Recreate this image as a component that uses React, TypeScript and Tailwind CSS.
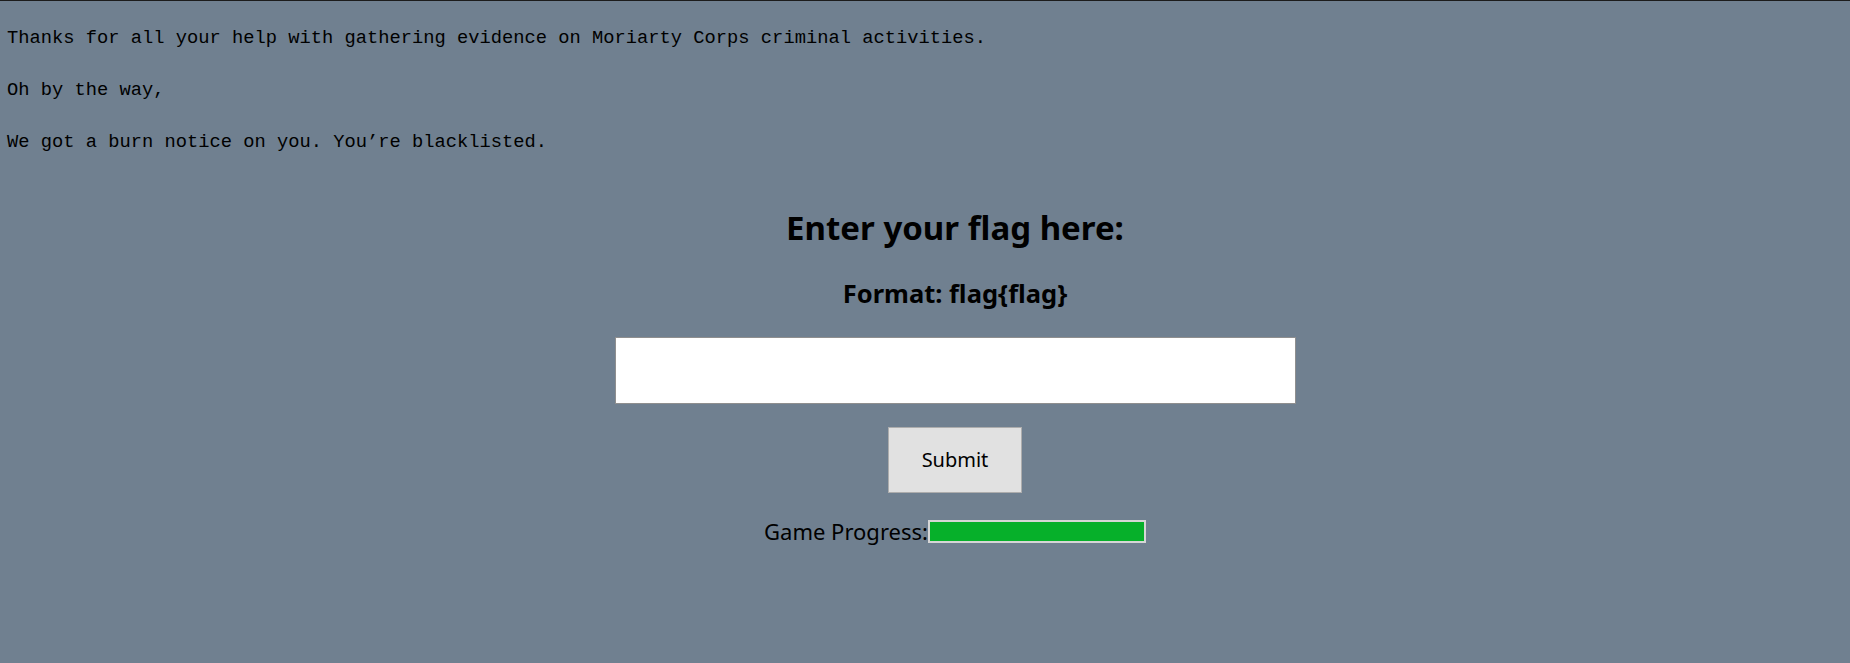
const Notice = () => {
  return (
    <div className="pt-[11px] pl-[7px] font-['Liberation_Mono',monospace] text-[18.75px] leading-[52px] text-black">
      <p>Thanks for all your help with gathering evidence on Moriarty Corps criminal activities.</p>
      <p>Oh by the way,</p>
      <p>We got a burn notice on you. You’re blacklisted.</p>
    </div>
  );
};

const FlagForm = () => {
  return (
    <section className="pl-[60px] flex flex-col items-center font-['Noto_Sans',sans-serif] text-black">
      <h1 className="mt-[40px] text-[33px] leading-[40px] font-bold">Enter your flag here:</h1>
      <h2 className="mt-[29px] text-[25.5px] leading-[32px] font-bold">Format: flag{"{"}flag{"}"}</h2>
      <input
        type="text"
        className="mt-[28px] w-[681px] h-[67px] bg-white border border-[#8f8f8f] outline-none px-2 text-[20px]"
      />
      <button className="mt-[23px] w-[134px] h-[66px] bg-[#e1e1e1] border border-[#adadad] text-[20px]">
        Submit
      </button>
      <div className="mt-[24px] flex items-center text-[22px] leading-[28px]">
        <span>Game Progress:</span>
        <div className="w-[218px] h-[23px] border-2 border-[#d6d6d6] bg-[#06b02a]" />
      </div>
    </section>
  );
};

export default function App() {
  return (
    <div className="min-h-screen bg-[#708090] border-t border-[#1c1c1c]">
      <Notice />
      <FlagForm />
    </div>
  );
}
